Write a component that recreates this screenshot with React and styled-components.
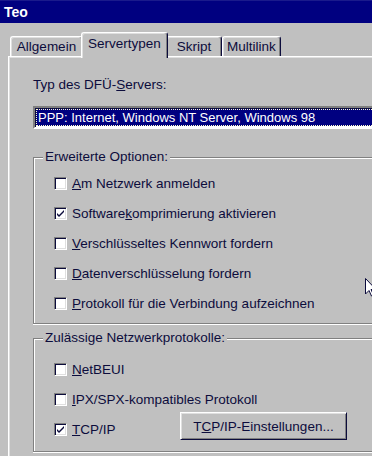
import styled, { createGlobalStyle } from "styled-components";

const GlobalStyle = createGlobalStyle`
  html, body {
    margin: 0;
    padding: 0;
    background: #c0c0c0;
  }
  body {
    font-family: "Liberation Sans", Arial, sans-serif;
    font-size: 13.5px;
    color: #0c0c3c;
  }
`;

const tabs = [
    { label: "Allgemein", width: 73 },
    { label: "Servertypen", width: 87, active: true },
    { label: "Skript", width: 56 },
    { label: "Multilink", width: 59 },
];

const options = [
    { key: "A", rest: "m Netzwerk anmelden" },
    { pre: "Software", key: "k", rest: "omprimierung aktivieren", checked: true },
    { key: "V", rest: "erschlüsseltes Kennwort fordern" },
    { key: "D", rest: "atenverschlüsselung fordern" },
    { key: "P", rest: "rotokoll für die Verbindung aufzeichnen" },
];

function Check({ checked }) {
    return (
        <Box>
            {checked && (
                <svg width="9" height="9" viewBox="0 0 9 9">
                    <path d="M1 4 L3 6 L8 1 L8 3 L3 8 L1 6 Z" fill="#0c0c3c" />
                </svg>
            )}
        </Box>
    );
}

function Option({ pre, accel, rest, checked }) {
    return (
        <Row>
            <Check checked={checked} />
            <span>{pre}<u>{accel}</u>{rest}</span>
        </Row>
    );
}

export default function App() {
    return (
        <Window>
            <GlobalStyle />
            <TitleBar>Teo</TitleBar>
            <Body>
                <TabRow>
                    {tabs.map((t) => (
                        <Tab key={t.label} $active={t.active} $width={t.width}>{t.label}</Tab>
                    ))}
                </TabRow>
                <Panel>
                    <Label>Typ des DFÜ-<u>S</u>ervers:</Label>
                    <Select>
                        <Highlight>PPP: Internet, Windows NT Server, Windows 98</Highlight>
                    </Select>

                    <Group $top={28}>
                        <Legend>Erweiterte Optionen:</Legend>
                        <Rows $gap={3} $bottom={5}>
                            {options.map((o) => (
                                <Option key={o.rest} pre={o.pre} accel={o.key} rest={o.rest} checked={o.checked} />
                            ))}
                        </Rows>
                    </Group>

                    <Group $top={14}>
                        <Legend>Zulässige Netzwerkprotokolle:</Legend>
                        <Rows $gap={8} $bottom={7}>
                            <Option accel="N" rest="etBEUI" />
                            <Option accel="I" rest="PX/SPX-kompatibles Protokoll" />
                            <ButtonRow>
                                <Option accel="T" rest="CP/IP" checked />
                                <Button>T<u>C</u>P/IP-Einstellungen...</Button>
                            </ButtonRow>
                        </Rows>
                    </Group>
                </Panel>
            </Body>
            <Cursor width="12" height="19" viewBox="0 0 12 19">
                <path d="M0.5 0.5 L0.5 16 L4 12.5 L6.5 18 L8.5 17 L6 11.5 L11 11.5 Z" fill="#fff" stroke="#0c0c3c" strokeWidth="1" />
            </Cursor>
        </Window>
    );
}

const Window = styled.div`
    position: relative;
    width: 372px;
    height: 456px;
    overflow: hidden;
    background: #c0c0c0;
`

const TitleBar = styled.div`
    display: flex;
    align-items: center;
    height: 23px;
    padding-left: 4px;
    background: #000080;
    border-top: 1px solid #1a1a8c;
    box-sizing: border-box;
    color: #ffffff;
    font-size: 14px;
    font-weight: 700;
`

const Body = styled.div`
    padding-top: 9px;
`

const TabRow = styled.div`
    display: flex;
    align-items: flex-end;
    height: 24px;
    margin-left: 10px;
`

const Tab = styled.div`
    position: relative;
    z-index: ${(p) => (p.$active ? 2 : 1)};
    box-sizing: border-box;
    flex: none;
    width: ${(p) => p.$width}px;
    height: ${(p) => (p.$active ? 26 : 20)}px;
    margin: ${(p) => (p.$active ? "0 -2px -2px -2px" : "0")};
    padding-top: ${(p) => (p.$active ? 3 : 2)}px;
    background: #c0c0c0;
    border-top: 1px solid #ffffff;
    border-left: 1px solid #ffffff;
    border-right: 1px solid #0c0c3c;
    border-radius: 3px 3px 0 0;
    box-shadow: inset -1px 0 0 #808080, inset 1px 1px 0 #dfdfdf;
    text-align: center;
    line-height: 16px;
    white-space: nowrap;
`

const Panel = styled.div`
    box-sizing: border-box;
    width: 440px;
    height: 420px;
    margin-left: 8px;
    padding: 20px 0 0 24px;
    border-top: 1px solid #ffffff;
    border-left: 1px solid #ffffff;
    box-shadow: inset 1px 1px 0 #dfdfdf;
`

const Label = styled.div`
    line-height: 16px;
`

const Select = styled.div`
    box-sizing: border-box;
    height: 23px;
    margin-top: 13px;
    padding: 1px 0 1px 0;
    background: #ffffff;
    border-top: 2px solid #808080;
    border-left: 2px solid #808080;
    border-bottom: 2px solid #ffffff;
    box-shadow: inset 1px 1px 0 #0c0c3c;
`

const Highlight = styled.div`
    box-sizing: border-box;
    height: 17px;
    margin-left: 1px;
    padding-left: 1px;
    background: #000080;
    border: 1px dotted #ffffd0;
    color: #ffffff;
    font-size: 13px;
    letter-spacing: 0;
    line-height: 15px;
    white-space: nowrap;
`

const Group = styled.div`
    margin-top: ${(p) => p.$top}px;
    border: 1px solid #808080;
    border-right: none;
    box-shadow: inset 1px 1px 0 #ffffff, 0 1px 0 #ffffff;
    padding-left: 20px;
`

const Legend = styled.div`
    width: fit-content;
    margin: -9px 0 0 -11px;
    padding: 0 2px;
    background: #c0c0c0;
    line-height: 16px;
`

const Rows = styled.div`
    display: flex;
    flex-direction: column;
    margin-top: ${(p) => p.$gap}px;
    padding-bottom: ${(p) => p.$bottom}px;
`

const Row = styled.div`
    display: flex;
    align-items: center;
    gap: 5px;
    height: 30px;
    white-space: nowrap;
`

const ButtonRow = styled.div`
    display: grid;
    grid-template-columns: 126px 167px;
    align-items: start;
`

const Box = styled.div`
    box-sizing: border-box;
    display: flex;
    align-items: center;
    justify-content: center;
    width: 13px;
    height: 13px;
    background: #ffffff;
    border-top: 1px solid #808080;
    border-left: 1px solid #808080;
    border-bottom: 1px solid #ffffff;
    border-right: 1px solid #ffffff;
    box-shadow: inset 1px 1px 0 #0c0c3c, inset -1px -1px 0 #dfdfdf;
`

const Button = styled.div`
    box-sizing: border-box;
    display: flex;
    align-items: center;
    justify-content: center;
    height: 28px;
    margin-top: -2px;
    background: #c0c0c0;
    border-top: 1px solid #ffffff;
    border-left: 1px solid #ffffff;
    border-bottom: 1px solid #0c0c3c;
    border-right: 1px solid #0c0c3c;
    box-shadow: inset 1px 1px 0 #dfdfdf, inset -1px -1px 0 #808080;
    white-space: nowrap;
`

const Cursor = styled.svg`
    position: absolute;
    left: 365px;
    top: 278px;
`
